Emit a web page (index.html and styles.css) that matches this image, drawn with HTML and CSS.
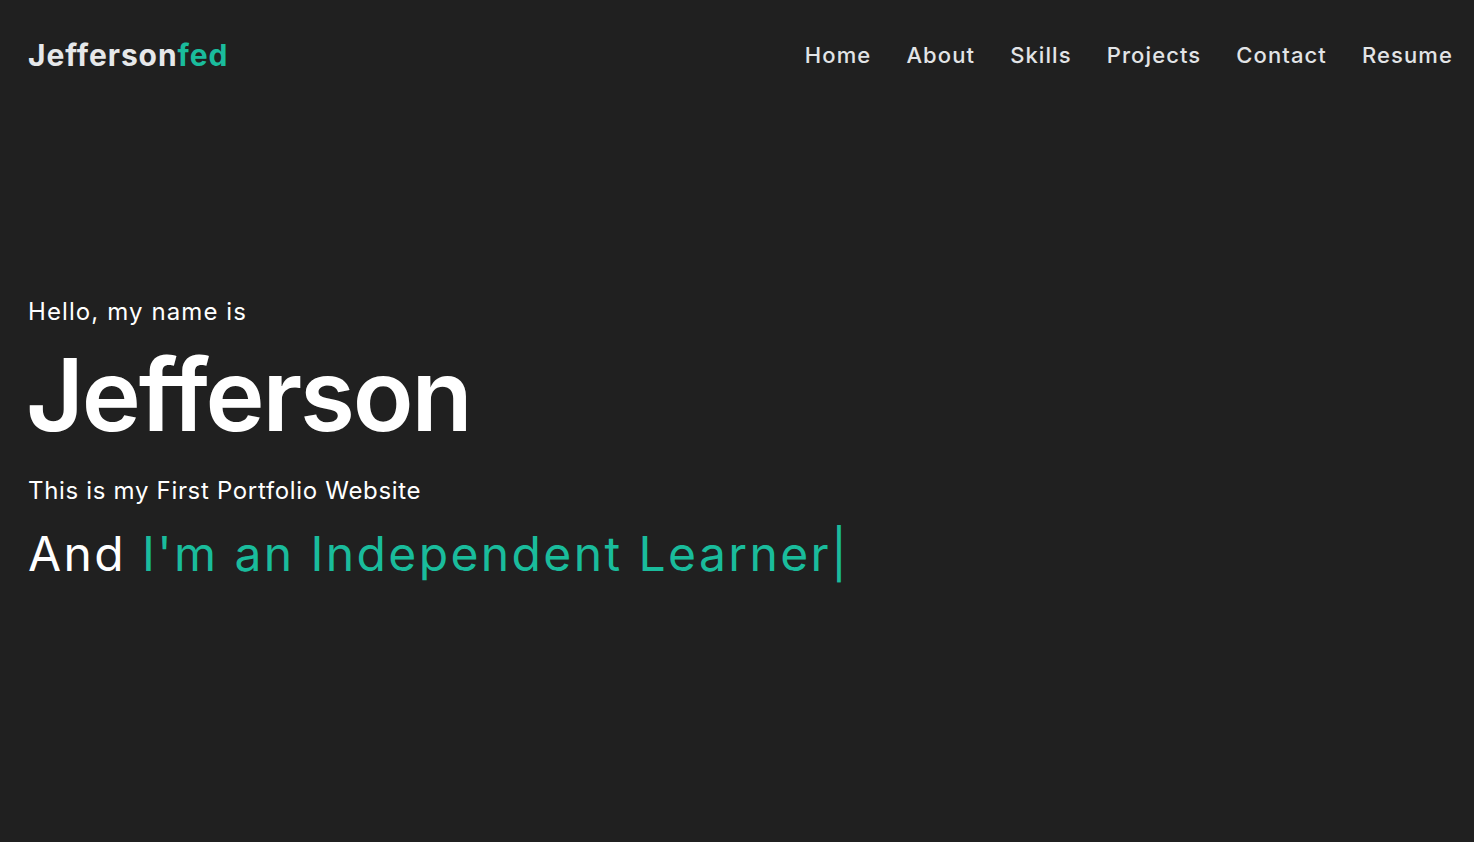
FILE: index.html
```html
<!DOCTYPE html>
<html lang="en">
<head>
<meta charset="utf-8">
<title>Jeffersonfed</title>
<link rel="stylesheet" href="styles.css">
</head>
<body>
<header class="topbar">
  <a class="logo" href="#">Jefferson<span class="accent">fed</span></a>
  <nav class="menu">
    <a href="#">Home</a>
    <a href="#">About</a>
    <a href="#">Skills</a>
    <a href="#">Projects</a>
    <a href="#">Contact</a>
    <a href="#">Resume</a>
  </nav>
</header>
<main class="hero">
  <p class="hello">Hello, my name is</p>
  <h1 class="name">Jefferson</h1>
  <p class="sub">This is my First Portfolio Website</p>
  <p class="typing">And <span class="accent">I'm an Independent Learner</span><span class="cursor">|</span></p>
</main>
</body>
</html>
```
FILE: styles.css
```css
* { box-sizing: border-box; }
html, body { margin: 0; padding: 0; }
body {
  background: #202020;
  color: #ffffff;
  font-family: "Inter", "Liberation Sans", sans-serif;
  height: 842px;
  overflow: hidden;
}
a { text-decoration: none; color: inherit; }
.accent { color: #1abc9c; }
.topbar {
  display: flex;
  justify-content: space-between;
  align-items: center;
  height: 110px;
  padding: 0 21px 0 28px;
}
.logo {
  font-size: 30px;
  font-weight: 700;
  letter-spacing: 0.9px;
  color: #e6e8ea;
}
.menu {
  display: flex;
  gap: 35px;
}
.menu a {
  font-size: 22px;
  font-weight: 500;
  letter-spacing: 1.1px;
  color: #e2e4e6;
}
.hero {
  padding: 184px 28px 0;
}
.hello {
  margin: 0;
  font-size: 24px;
  line-height: 36px;
  letter-spacing: 1.1px;
}
.name {
  margin: 0 0 0 -2px;
  font-size: 100px;
  font-weight: 600;
  line-height: 130px;
  letter-spacing: -2.2px;
}
.sub {
  margin: 13px 0 0;
  font-size: 24px;
  line-height: 36px;
  letter-spacing: 0.68px;
}
.typing {
  margin: 9px 0 0;
  font-size: 48px;
  line-height: 72px;
  letter-spacing: 2.4px;
}
.cursor { color: #1abc9c; letter-spacing: 0; }
```
